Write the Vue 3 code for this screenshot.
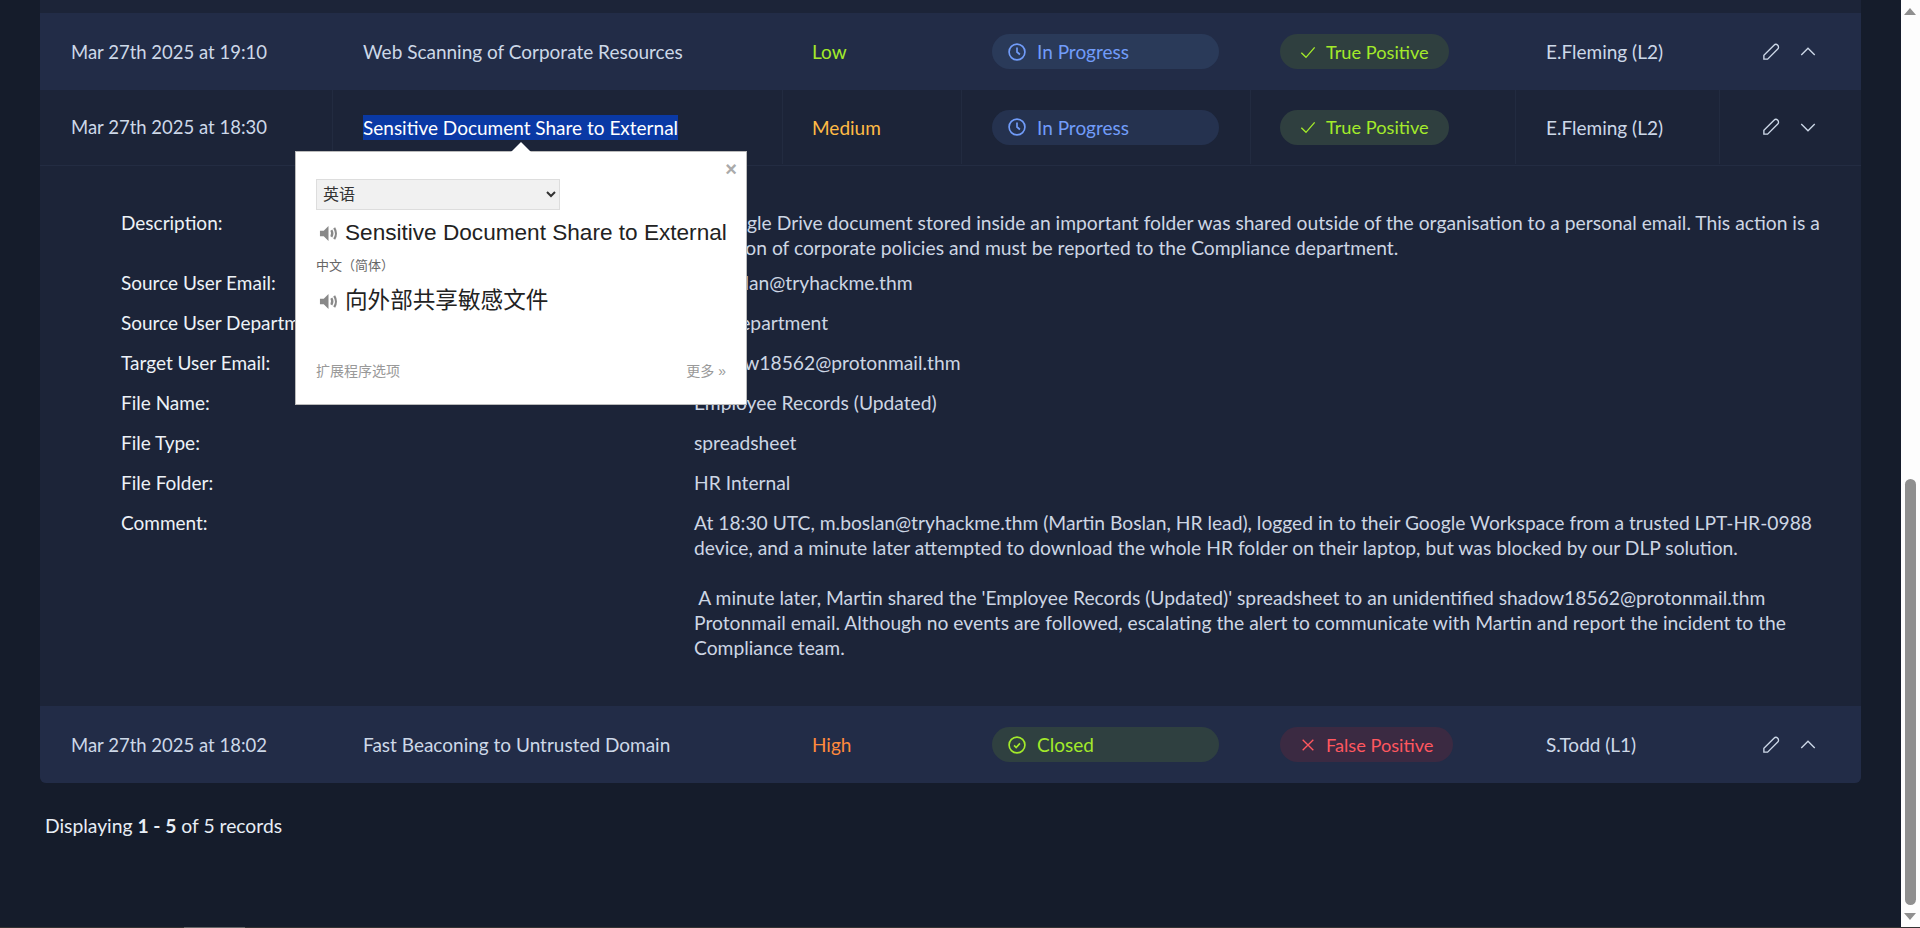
<script setup>
import { ref } from 'vue'

const lang = ref('英语')

const fields = [
  { label: 'Description:', lines: ['A Google Drive document stored inside an important folder was shared outside of the organisation to a personal email. This action is a violation of corporate policies and must be reported to the Compliance department.'] },
  { label: 'Source User Email:', lines: ['m.boslan@tryhackme.thm'] },
  { label: 'Source User Department:', lines: ['HR Department'] },
  { label: 'Target User Email:', lines: ['shadow18562@protonmail.thm'] },
  { label: 'File Name:', lines: ['Employee Records (Updated)'] },
  { label: 'File Type:', lines: ['spreadsheet'] },
  { label: 'File Folder:', lines: ['HR Internal'] },
  { label: 'Comment:', lines: [
    'At 18:30 UTC, m.boslan@tryhackme.thm (Martin Boslan, HR lead), logged in to their Google Workspace from a trusted LPT-HR-0988 device, and a minute later attempted to download the whole HR folder on their laptop, but was blocked by our DLP solution.',
    '\u00a0A minute later, Martin shared the \'Employee Records (Updated)\' spreadsheet to an unidentified shadow18562@protonmail.thm Protonmail email. Although no events are followed, escalating the alert to communicate with Martin and report the incident to the Compliance team.'
  ] }
]
</script>

<template>
  <div class="screen">
    <div class="main">
      <div class="page">
        <div class="table">
          <div class="top-strip"></div>

          <div class="row hi">
            <div class="cell c-time">Mar 27th 2025 at 19:10</div>
            <div class="cell c-name">Web Scanning of Corporate Resources</div>
            <div class="cell c-sev low">Low</div>
            <div class="cell c-status">
              <span class="pill wide blue">
                <svg class="ic" viewBox="0 0 24 24"><circle cx="12" cy="12" r="9.5"/><path d="M12 6.5V12l3.5 3"/></svg>
                In Progress
              </span>
            </div>
            <div class="cell c-verdict">
              <span class="pill green">
                <svg class="ic small" viewBox="0 0 24 24"><path d="M2 13l7 7L22 5"/></svg>
                True Positive
              </span>
            </div>
            <div class="cell c-owner">E.Fleming (L2)</div>
            <div class="cell c-act">
              <svg class="act" viewBox="0 0 24 24"><path d="M2.500 21.500v-5L16 3a3.500 3.500 0 0 1 5 5L7.500 21.500z"/></svg>
              <svg class="act" viewBox="0 0 24 24"><path d="M3 16l9-9 9 9"/></svg>
            </div>
          </div>

          <div class="row lined">
            <div class="cell c-time">Mar 27th 2025 at 18:30</div>
            <div class="cell c-name"><span class="selected">Sensitive Document Share to External</span></div>
            <div class="cell c-sev medium">Medium</div>
            <div class="cell c-status">
              <span class="pill wide blue dim">
                <svg class="ic" viewBox="0 0 24 24"><circle cx="12" cy="12" r="9.5"/><path d="M12 6.5V12l3.5 3"/></svg>
                In Progress
              </span>
            </div>
            <div class="cell c-verdict">
              <span class="pill green">
                <svg class="ic small" viewBox="0 0 24 24"><path d="M2 13l7 7L22 5"/></svg>
                True Positive
              </span>
            </div>
            <div class="cell c-owner">E.Fleming (L2)</div>
            <div class="cell c-act">
              <svg class="act" viewBox="0 0 24 24"><path d="M2.500 21.500v-5L16 3a3.500 3.500 0 0 1 5 5L7.500 21.500z"/></svg>
              <svg class="act" viewBox="0 0 24 24"><path d="M3 8l9 9 9-9"/></svg>
            </div>
          </div>

          <div class="detail">
            <div v-for="f in fields" :key="f.label" class="field">
              <div class="label">{{ f.label }}</div>
              <div class="value">
                <p v-for="(line, i) in f.lines" :key="i">{{ line }}</p>
              </div>
            </div>
          </div>

          <div class="row hi last">
            <div class="cell c-time">Mar 27th 2025 at 18:02</div>
            <div class="cell c-name">Fast Beaconing to Untrusted Domain</div>
            <div class="cell c-sev high">High</div>
            <div class="cell c-status">
              <span class="pill wide closed">
                <svg class="ic" viewBox="0 0 24 24"><circle cx="12" cy="12" r="9.5"/><path d="M8.500 12.500l2.500 2.500 4.500-5"/></svg>
                Closed
              </span>
            </div>
            <div class="cell c-verdict">
              <span class="pill red">
                <svg class="ic small" viewBox="0 0 24 24"><path d="M4 4l16 16M20 4L4 20"/></svg>
                False Positive
              </span>
            </div>
            <div class="cell c-owner">S.Todd (L1)</div>
            <div class="cell c-act">
              <svg class="act" viewBox="0 0 24 24"><path d="M2.500 21.500v-5L16 3a3.500 3.500 0 0 1 5 5L7.500 21.500z"/></svg>
              <svg class="act" viewBox="0 0 24 24"><path d="M3 16l9-9 9 9"/></svg>
            </div>
          </div>
        </div>

        <div class="records">Displaying <b>1 - 5</b> of 5 records</div>

        <!-- translate popup, sits over the table -->
        <div class="bubble">
          <div class="arrow"></div>
          <span class="close">×</span>
          <select v-model="lang" class="lang">
            <option>英语</option>
          </select>
          <div class="phrase">
            <svg class="speaker" viewBox="0 0 20 20"><path d="M1 7h4l5-5v16l-5-5H1z"/><path class="wave" d="M13 6.500c1.200 2 1.200 5 0 7M16 4c2.300 3.500 2.300 8.500 0 12"/></svg>
            <span>Sensitive Document Share to External</span>
          </div>
          <div class="target">中文（简体）</div>
          <div class="phrase cn">
            <svg class="speaker" viewBox="0 0 20 20"><path d="M1 7h4l5-5v16l-5-5H1z"/><path class="wave" d="M13 6.500c1.200 2 1.200 5 0 7M16 4c2.300 3.500 2.300 8.500 0 12"/></svg>
            <span>向外部共享敏感文件</span>
          </div>
          <div class="bubble-foot">
            <span>扩展程序选项</span>
            <span>更多 »</span>
          </div>
        </div>
      </div>

      <div class="scrollbar">
        <div class="sb-arrow up"></div>
        <div class="sb-track"><div class="sb-thumb"></div></div>
        <div class="sb-arrow down"></div>
      </div>
    </div>
    <div class="hbar"><div class="hbar-thumb"></div></div>
  </div>
</template>

<style scoped>
.screen {
  display: flex;
  flex-direction: column;
  height: 928px;
  overflow: hidden;
  background: #151c2b;
  font-family: "Lato", "Noto Sans CJK SC", sans-serif;
  font-size: 19px;
  color: #e8edf5;
}

.main {
  display: flex;
  flex: 1;
  min-height: 0;
}

.page {
  position: relative;
  flex: 1;
  padding: 0 40px;
}

.table {
  background: #1c2438;
  border-radius: 0 0 6px 6px;
  overflow: hidden;
}

.top-strip {
  height: 13px;
}

.row {
  display: grid;
  grid-template-columns: 292px 450px 179px 289px 265px 204px 1fr;
  height: 77px;
  align-items: stretch;
}

.row.hi {
  background: #222c47;
}

.row.lined {
  height: 76px;
  box-sizing: border-box;
  padding-bottom: 1px;
  border-bottom: 1px solid #232c42;
}

.row.lined .cell + .cell {
  box-shadow: inset 1px 0 0 #222b40;
}

.cell {
  display: flex;
  align-items: center;
  padding-left: 31px;
  color: #cdd8e8;
  white-space: nowrap;
}

.c-time {
  font-size: 18.5px;
}

.c-sev {
  padding-left: 30px;
}

.c-verdict {
  padding-left: 30px;
}

.low { color: #a3ea2a; }
.medium { color: #ffbb45; }
.high { color: #ff8a3c; }

.selected {
  display: inline-block;
  line-height: 25px;
  background: #0a39a5;
  color: #fff;
}

.pill {
  display: inline-flex;
  align-items: center;
  gap: 10px;
  height: 35px;
  padding: 0 20px;
  border-radius: 18px;
  font-size: 18.2px;
}

.pill.wide {
  width: 227px;
  box-sizing: border-box;
  padding-left: 15px;
  font-size: 19px;
}

.blue { background: #2a3a59; color: #719cf9; }
.blue.dim { background: #25324f; }
.green { background: #2f3f3f; color: #a3ea2a; }
.closed { background: #2f4040; color: #a3ea2a; }
.red { background: #3b2a42; color: #ff575f; }

.ic {
  width: 20px;
  height: 20px;
  fill: none;
  stroke: currentColor;
  stroke-width: 2;
  flex: none;
}

.ic.small {
  width: 16px;
  height: 16px;
}

.c-act {
  gap: 19px;
  padding-left: 43px;
}

.act {
  width: 18px;
  height: 18px;
  fill: none;
  stroke: #cdd8e8;
  stroke-width: 1.8;
}

.detail {
  height: 540px;
  box-sizing: border-box;
  padding: 44px 36px 0 81px;
}

.field {
  display: grid;
  grid-template-columns: 573px 1fr;
  line-height: 25px;
  margin-bottom: 15px;
}

.field:first-child {
  margin-bottom: 10px;
}

.label {
  color: #edf2f7;
}

.value {
  color: #cdd6e4;
  font-size: 19.25px;
}

.value p {
  margin: 0 0 25px;
}

.value p:last-child {
  margin: 0;
}

.records {
  padding: 30px 0 0 5px;
  line-height: 25px;
  font-size: 19.3px;
}

.records b {
  font-weight: 700;
}

.bubble {
  position: absolute;
  left: 295px;
  top: 151px;
  width: 452px;
  height: 254px;
  box-sizing: border-box;
  padding: 27px 20px 0;
  background: #fff;
  border: 1px solid #bbb;
  font-family: "Liberation Sans", "Noto Sans CJK SC", sans-serif;
  color: #222;
}

.arrow {
  position: absolute;
  left: 215px;
  top: -10px;
  width: 0;
  height: 0;
  border-left: 10px solid transparent;
  border-right: 10px solid transparent;
  border-bottom: 10px solid #fff;
}

.close {
  position: absolute;
  right: 9px;
  top: 7px;
  font-size: 20px;
  font-weight: 700;
  line-height: 20px;
  color: #aaa;
}

.lang {
  display: block;
  width: 244px;
  height: 31px;
  padding-left: 2px;
  border: 1px solid #ddd;
  background: #f1f1f1;
  font-size: 16px;
  color: #333;
  font-family: inherit;
}

.phrase {
  display: flex;
  align-items: center;
  gap: 7px;
  margin-top: 8px;
  font-size: 22.6px;
  line-height: 30px;
  white-space: nowrap;
}

.phrase.cn {
  margin-top: 10px;
}

.speaker {
  width: 19px;
  height: 19px;
  margin-left: 3px;
  flex: none;
  fill: #888;
}

.wave {
  fill: none;
  stroke: #888;
  stroke-width: 2.4;
}

.target {
  margin-top: 8px;
  font-size: 13px;
  line-height: 20px;
  color: #666;
}

.bubble-foot {
  display: flex;
  justify-content: space-between;
  margin-top: 44px;
  font-size: 14px;
  color: #999;
}

.scrollbar {
  display: flex;
  flex-direction: column;
  width: 19px;
  flex: none;
  background: #fdfdfd;
}

.sb-arrow {
  height: 22px;
  position: relative;
  flex: none;
}

.sb-arrow::after {
  content: "";
  position: absolute;
  left: 3px;
  border-left: 6.5px solid transparent;
  border-right: 6.5px solid transparent;
}

.sb-arrow.up::after {
  top: 8px;
  border-bottom: 7px solid #8f8f8f;
}

.sb-arrow.down::after {
  top: 8px;
  border-top: 7px solid #8f8f8f;
}

.sb-track {
  flex: 1;
  display: flex;
  flex-direction: column;
  justify-content: flex-end;
}

.sb-thumb {
  height: 426px;
  margin: 0 4px;
  background: #8f8f8f;
  border-radius: 6px;
}

.hbar {
  height: 1px;
  flex: none;
  background: #333;
  padding-left: 184px;
}

.hbar-thumb {
  width: 61px;
  height: 1px;
  background: #666;
}
</style>

<style>
html, body {
  margin: 0;
  background: #151c2b;
}
</style>
